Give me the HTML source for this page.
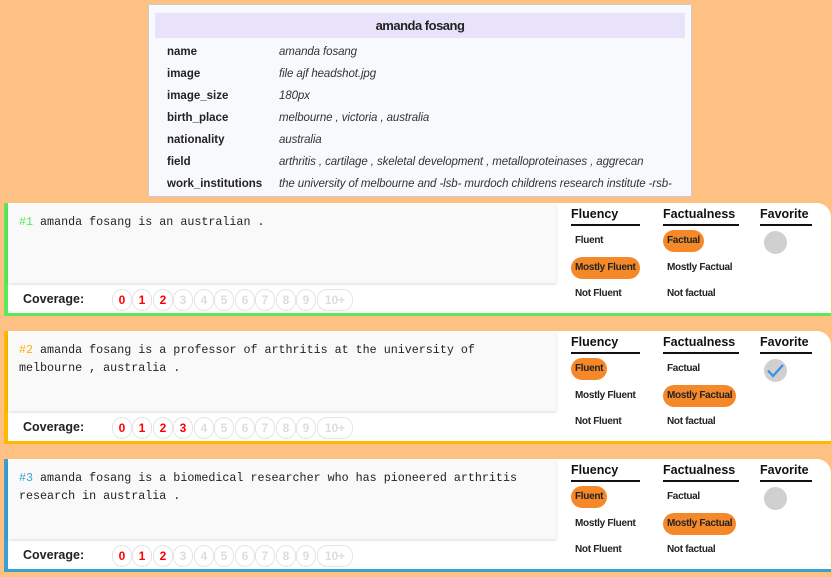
<!DOCTYPE html><html><head><style>
body{margin:0;width:832px;height:577px;background:#ffc183;font-family:"Liberation Sans",sans-serif;position:relative;overflow:hidden}
.info{position:absolute;left:148px;top:4px;width:542px;height:191px;background:#f8f9fc;border:1px solid #c8c8d0}
.info .hd{position:absolute;left:6px;top:8px;width:530px;height:25px;background:#e8e3fa;text-align:center;font-weight:bold;font-size:13px;line-height:25px;color:#222;letter-spacing:-0.5px}
.row{position:absolute;left:18px;font-size:11.5px;color:#222}
.row b{position:absolute;left:0;width:110px;white-space:nowrap}
.row i{position:absolute;left:112px;white-space:nowrap;color:#333;letter-spacing:-0.1px}
.card{position:absolute;left:4px;width:823px;height:110px;background:#fff;border-top-right-radius:14px}
.txt{position:absolute;left:0;top:2px;width:548px;height:78px;background:#f9f9f9;box-shadow:0 1px 3px rgba(0,0,0,.15);font-family:"Liberation Mono",monospace;font-size:11.7px;line-height:18px;padding:8px 0 0 11px;box-sizing:border-box;color:#222;white-space:pre}
.cov{position:absolute;left:15px;top:89px;font-weight:bold;font-size:12.5px;color:#222}
.bub{position:absolute;top:86px;width:18px;height:20px;border:1px solid #e4e4e4;border-radius:10px;text-align:center;font-size:12px;line-height:20px;font-weight:bold;color:#ddd}
.bub.r{color:#f00}
.col{position:absolute;top:4px;font-weight:bold;font-size:12.5px;color:#111;border-bottom:2px solid #111;padding-bottom:3px}
.op{position:absolute;font-size:10px;letter-spacing:-0.3px;font-weight:bold;color:#222;height:22px;line-height:22px;padding:0 4px;border-radius:11px;white-space:nowrap}
.op.s{background:#f5892a}
.fav{position:absolute;left:756px;top:28px;width:23px;height:23px;border-radius:50%;background:#d0d0d0}
</style></head><body>
<div class="info"><div class="hd">amanda fosang</div>
<div class="row" style="top:41px"><b>name</b><i>amanda fosang</i></div>
<div class="row" style="top:63px"><b>image</b><i>file ajf headshot.jpg</i></div>
<div class="row" style="top:85px"><b>image_size</b><i>180px</i></div>
<div class="row" style="top:107px"><b>birth_place</b><i>melbourne , victoria , australia</i></div>
<div class="row" style="top:129px"><b>nationality</b><i>australia</i></div>
<div class="row" style="top:151px"><b>field</b><i>arthritis , cartilage , skeletal development , metalloproteinases , aggrecan</i></div>
<div class="row" style="top:173px"><b>work_institutions</b><i>the university of melbourne and -lsb- murdoch childrens research institute -rsb-</i></div>
</div>

<div class="card" style="top:203px;border-left:4px solid #5be85b;border-bottom:3px solid #5be85b">
<div class="txt"><span style="color:#5be85b">#1</span> amanda fosang is an australian .</div>
<div class="cov">Coverage:</div>
<div class="bub r" style="left:104px">0</div><div class="bub r" style="left:124px">1</div><div class="bub r" style="left:145px">2</div><div class="bub" style="left:165px">3</div><div class="bub" style="left:186px">4</div><div class="bub" style="left:206px">5</div><div class="bub" style="left:227px">6</div><div class="bub" style="left:247px">7</div><div class="bub" style="left:268px">8</div><div class="bub" style="left:288px">9</div><div class="bub" style="left:309px;width:34px">10+</div>
<div class="col" style="left:563px;width:69px">Fluency</div><div class="col" style="left:655px;width:76px">Factualness</div><div class="col" style="left:752px;width:52px">Favorite</div>
<div class="op" style="left:563px;top:27px">Fluent</div><div class="op s" style="left:563px;top:54px">Mostly Fluent</div><div class="op" style="left:563px;top:80px">Not Fluent</div>
<div class="op s" style="left:655px;top:27px">Factual</div><div class="op" style="left:655px;top:54px">Mostly Factual</div><div class="op" style="left:655px;top:80px">Not factual</div>
<div class="fav"></div>
</div>

<div class="card" style="top:331px;border-left:4px solid #ffb800;border-bottom:3px solid #ffb800">
<div class="txt"><span style="color:#ffb000">#2</span> amanda fosang is a professor of arthritis at the university of
melbourne , australia .</div>
<div class="cov">Coverage:</div>
<div class="bub r" style="left:104px">0</div><div class="bub r" style="left:124px">1</div><div class="bub r" style="left:145px">2</div><div class="bub r" style="left:165px">3</div><div class="bub" style="left:186px">4</div><div class="bub" style="left:206px">5</div><div class="bub" style="left:227px">6</div><div class="bub" style="left:247px">7</div><div class="bub" style="left:268px">8</div><div class="bub" style="left:288px">9</div><div class="bub" style="left:309px;width:34px">10+</div>
<div class="col" style="left:563px;width:69px">Fluency</div><div class="col" style="left:655px;width:76px">Factualness</div><div class="col" style="left:752px;width:52px">Favorite</div>
<div class="op s" style="left:563px;top:27px">Fluent</div><div class="op" style="left:563px;top:54px">Mostly Fluent</div><div class="op" style="left:563px;top:80px">Not Fluent</div>
<div class="op" style="left:655px;top:27px">Factual</div><div class="op s" style="left:655px;top:54px">Mostly Factual</div><div class="op" style="left:655px;top:80px">Not factual</div>
<div class="fav"><svg width="23" height="23" viewBox="0 0 23 23"><path d="M4 11.5l5 5.5 10-11" fill="none" stroke="#3a8ee6" stroke-width="2.2"/></svg></div>
</div>

<div class="card" style="top:459px;border-left:4px solid #3aa0d0;border-bottom:3px solid #3aa0d0">
<div class="txt"><span style="color:#3aa0d0">#3</span> amanda fosang is a biomedical researcher who has pioneered arthritis
research in australia .</div>
<div class="cov">Coverage:</div>
<div class="bub r" style="left:104px">0</div><div class="bub r" style="left:124px">1</div><div class="bub r" style="left:145px">2</div><div class="bub" style="left:165px">3</div><div class="bub" style="left:186px">4</div><div class="bub" style="left:206px">5</div><div class="bub" style="left:227px">6</div><div class="bub" style="left:247px">7</div><div class="bub" style="left:268px">8</div><div class="bub" style="left:288px">9</div><div class="bub" style="left:309px;width:34px">10+</div>
<div class="col" style="left:563px;width:69px">Fluency</div><div class="col" style="left:655px;width:76px">Factualness</div><div class="col" style="left:752px;width:52px">Favorite</div>
<div class="op s" style="left:563px;top:27px">Fluent</div><div class="op" style="left:563px;top:54px">Mostly Fluent</div><div class="op" style="left:563px;top:80px">Not Fluent</div>
<div class="op" style="left:655px;top:27px">Factual</div><div class="op s" style="left:655px;top:54px">Mostly Factual</div><div class="op" style="left:655px;top:80px">Not factual</div>
<div class="fav"></div>
</div>
</body></html>
